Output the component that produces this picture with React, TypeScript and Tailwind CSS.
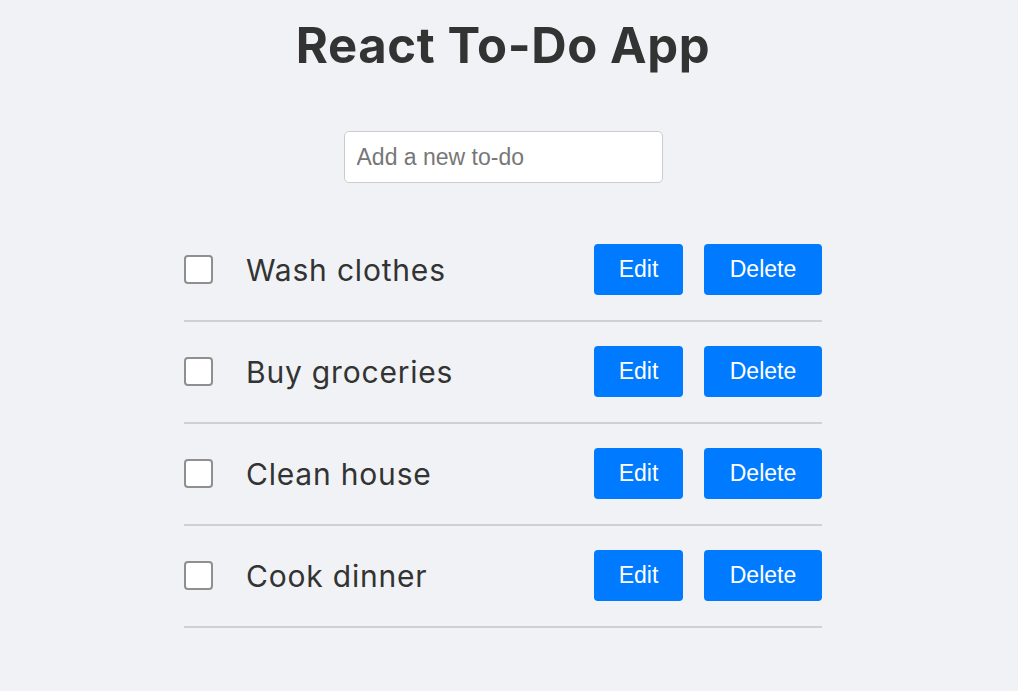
import { useState } from "react"

type Todo = { id: number; text: string; done: boolean }

const INITIAL: Todo[] = [
  { id: 1, text: "Wash clothes", done: false },
  { id: 2, text: "Buy groceries", done: false },
  { id: 3, text: "Clean house", done: false },
  { id: 4, text: "Cook dinner", done: false },
]

function TodoRow({ todo, onToggle }: { todo: Todo; onToggle: () => void }) {
  return (
    <li className="flex items-center border-b-2 border-[#cfd0d2] pt-[24px] pb-[25px]">
      <button
        type="button"
        onClick={onToggle}
        className="h-[29px] w-[29px] shrink-0 rounded-[4px] border-2 border-[#8f8f8f] bg-white"
        aria-label={`Toggle ${todo.text}`}
      />
      <span className="ml-[33px] flex-1 font-['Inter',sans-serif] text-[30px] leading-[36px] tracking-[0.8px] text-[#333333]">
        {todo.text}
      </span>
      <button
        type="button"
        className="h-[51px] w-[89px] rounded-[4px] bg-[#007bff] font-['Liberation_Sans',Arial,sans-serif] text-[23px] text-white"
      >
        Edit
      </button>
      <button
        type="button"
        className="ml-[21px] h-[51px] w-[118px] rounded-[4px] bg-[#007bff] font-['Liberation_Sans',Arial,sans-serif] text-[23px] text-white"
      >
        Delete
      </button>
    </li>
  )
}

export default function App() {
  const [todos, setTodos] = useState<Todo[]>(INITIAL)
  const [draft, setDraft] = useState("")

  const toggle = (id: number) =>
    setTodos((t) => t.map((x) => (x.id === id ? { ...x, done: !x.done } : x)))

  return (
    <div className="min-h-[691px] bg-[#f0f2f5]">
      <div className="flex w-[1006px] flex-col items-center pt-[16px]">
        <h1 className="font-['Inter',sans-serif] text-[49px] font-bold leading-[60px] tracking-[0.6px] text-[#333333]">
          React To-Do App
        </h1>
        <input
          value={draft}
          onChange={(e) => setDraft(e.target.value)}
          placeholder="Add a new to-do"
          className="mt-[55px] h-[52px] w-[319px] rounded-[5px] border border-[#cccccc] bg-white px-[12px] font-['Liberation_Sans',Arial,sans-serif] text-[23px] text-[#333] placeholder:text-[#777777] outline-none"
        />
        <ul className="mt-[37px] w-[638px]">
          {todos.map((t) => (
            <TodoRow key={t.id} todo={t} onToggle={() => toggle(t.id)} />
          ))}
        </ul>
      </div>
    </div>
  )
}
